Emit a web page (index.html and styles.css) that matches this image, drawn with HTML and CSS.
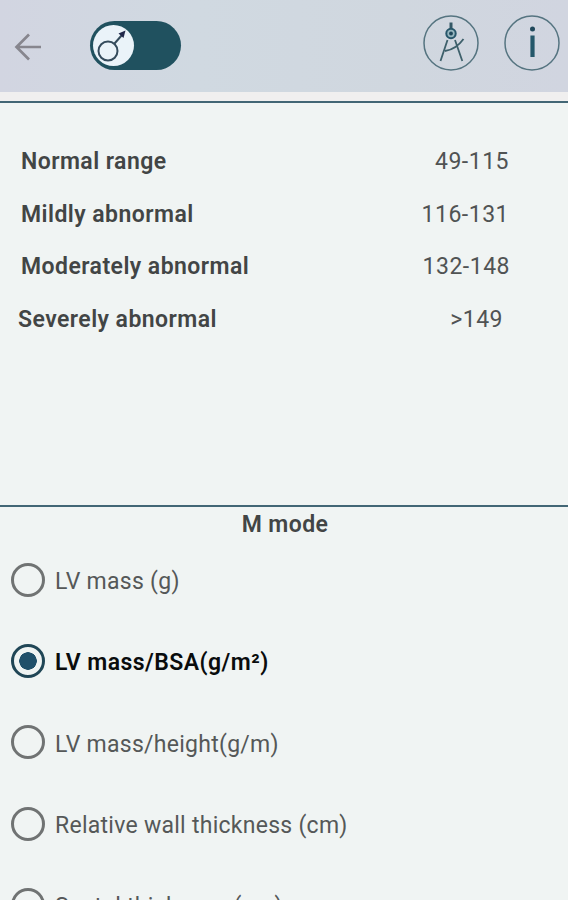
FILE: index.html
```html
<!DOCTYPE html>
<html lang="en">
<head>
<meta charset="utf-8">
<title>LV mass</title>
<link rel="stylesheet" href="styles.css">
</head>
<body>
<header class="bar">
  <svg class="back" width="30" height="30" viewBox="0 0 30 30"><path d="M28 15H4M16 2.500 3.500 15 16 27.500"/></svg>
  <div class="switch">
    <div class="knob"><svg width="42" height="42" viewBox="0 0 42 42"><circle cx="15" cy="26" r="9.500"/><path d="M21.500 18.500 29 10"/><path class="tip" d="M32.500 5.500 30.500 13 25.500 8.500Z"/></svg></div>
  </div>
  <div class="tools">
    <svg width="56" height="56" viewBox="0 0 56 56"><circle class="ring" cx="28" cy="28" r="27"/><path class="stem" d="M28 7.500v7"/><circle class="hinge" cx="28" cy="18.500" r="4.700"/><circle class="pin" cx="28" cy="18.500" r="1.900"/><path class="leg" d="m24.500 25-7 21M32 25l7.300 21M22 36c7-1 13.500-5 18.500-12"/></svg>
    <svg width="56" height="56" viewBox="0 0 56 56"><circle class="ring" cx="28" cy="28" r="27"/><circle class="pin" cx="28.500" cy="14" r="2.500"/><path class="letter" d="M28.500 20.500v21.500"/></svg>
  </div>
</header>
<section class="ranges">
  <div class="row"><b>Normal range</b><span>49-115</span></div>
  <div class="row"><b>Mildly abnormal</b><span>116-131</span></div>
  <div class="row wide"><b>Moderately abnormal</b><span>132-148</span></div>
  <div class="row last"><b>Severely abnormal</b><span>&gt;149</span></div>
</section>
<main class="modes">
  <h2>M mode</h2>
  <div class="options">
    <div class="option"><i></i><span>LV mass (g)</span></div>
    <div class="option selected"><i></i><span>LV mass/BSA(g/m²)</span></div>
    <div class="option"><i></i><span>LV mass/height(g/m)</span></div>
    <div class="option"><i></i><span>Relative wall thickness (cm)</span></div>
    <div class="option"><i></i><span>Septal thickness (cm)</span></div>
  </div>
</main>
</body>
</html>
```
FILE: styles.css
```css
* { box-sizing: border-box; }
body { margin: 0; height: 900px; overflow: hidden; background: #f0f4f3; color: #424545; font: 23px/30px Roboto, sans-serif; letter-spacing: .27px; }
svg { display: block; fill: none; }
.bar { height: 92px; padding: 0 8px 6px 13px; display: flex; align-items: center; background: linear-gradient(90deg, #d2d5e1, #d0d9e1 35%, #d0d7df 70%, #d1d5e0); }
.back { stroke: #87868e; stroke-width: 2.7; margin-top: 8px; }
.switch { width: 91px; height: 49px; margin: 4px 0 0 47px; padding: 4px 3px; border-radius: 25px; background: #20515f; }
.knob { width: 41px; height: 41px; border-radius: 50%; background: #eaf3f9; }
.knob svg { stroke: #344b5c; stroke-width: 2; }
.knob .tip { fill: #20274a; stroke: none; }
.tools { display: flex; gap: 25px; margin-left: auto; }
.ring { stroke: #557480; stroke-width: 1.5; }
.stem { stroke: #345866; stroke-width: 3; }
.hinge { stroke: #27566a; stroke-width: 2; fill: #96b6bf; }
.pin { fill: #20485b; }
.leg { stroke: #3e606b; stroke-width: 1.8; }
.letter { stroke: #24576a; stroke-width: 4.2; }
.ranges { height: 406px; margin-top: 9px; padding: 44px 59px 0 21px; border: solid #426675; border-width: 2px 0; box-shadow: 0 -9px #f0efef; }
.row { display: flex; justify-content: space-between; height: 52.5px; }
.row b, h2, .selected { font-weight: 600; }
.row b, .selected { letter-spacing: .45px; }
.row span { letter-spacing: .5px; color: #505353; }
.row.wide { margin-right: -1px; }
.row.last { margin-left: -3px; padding-right: 6px; }
.modes { text-align: center; }
h2 { margin: 3px 0 0 2px; font-size: 23px; line-height: 30px; letter-spacing: .4px; }
.options { text-align: left; margin-top: -1px; }
.option { height: 81.3px; display: flex; align-items: center; gap: 10px; padding-left: 11px; color: #555858; }
.option span { padding-top: 5px; }
.option i { width: 34px; height: 34px; border: 3px solid #707373; border-radius: 50%; }
.option.selected { color: #090c0d; }
.selected i { border-color: #204656; background: radial-gradient(circle, #20506a 8.5px, transparent 9px); }
```
